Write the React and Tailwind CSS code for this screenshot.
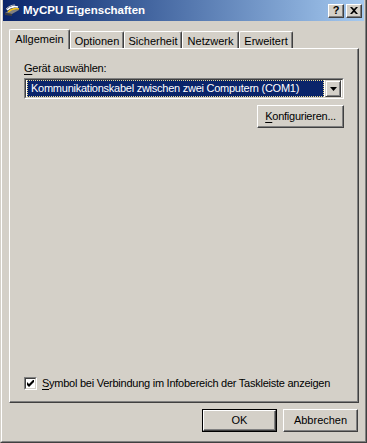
import React from 'react';

const font = { fontFamily: '"Liberation Sans", Arial, sans-serif' };

function TitleIcon() {
  return (
    <svg width="16" height="16" viewBox="0 0 16 16" className="shrink-0">
      <path d="M1 10 L9 6 L15 7 L8 11 Z" fill="#808080" />
      <path d="M1 10 L8 11 L8 13 L1 12 Z" fill="#404040" />
      <path d="M3 7 C6 4 10 3 14 4" stroke="#ffffff" strokeWidth="1.6" fill="none" />
      <path d="M4 9 C7 6 11 5 15 6" stroke="#f0c020" strokeWidth="1.6" fill="none" />
      <path d="M2 6 C5 3 8 2 11 2" stroke="#c0c0c0" strokeWidth="1" fill="none" />
    </svg>
  );
}

function CaptionButton({ children }) {
  return (
    <div className="w-[16px] h-[14px] bg-[#d4d0c8] border-t border-l border-t-white border-l-white border-r border-b border-r-[#404040] border-b-[#404040] shadow-[inset_-1px_-1px_0_#808080] flex items-center justify-center">
      {children}
    </div>
  );
}

function Tab({ label, width, selected }) {
  if (selected) {
    return (
      <div
        className="relative z-10 h-[20px] -mb-px bg-[#d4d0c8] border-l border-t border-l-white border-t-white border-r border-r-[#404040] shadow-[inset_-1px_0_0_#808080] rounded-tl-[2px] rounded-tr-[2px] flex justify-center pt-[3px] text-[11px] leading-[13px] text-black"
        style={{ width }}
      >
        {label}
      </div>
    );
  }
  return (
    <div
      className="h-[17px] bg-[#d4d0c8] border-l border-t border-l-white border-t-white border-r border-r-[#404040] shadow-[inset_-1px_0_0_#808080] rounded-tl-[2px] rounded-tr-[2px] flex justify-center pt-[3px] text-[11px] leading-[13px] text-black"
      style={{ width }}
    >
      {label}
    </div>
  );
}

function Button({ children, isDefault, className = '' }) {
  const inner = (
    <div className="w-full h-full bg-[#d4d0c8] border-t border-l border-t-white border-l-white border-r border-b border-r-[#404040] border-b-[#404040] shadow-[inset_-1px_-1px_0_#808080] flex items-center justify-center text-[11px] leading-[13px] text-black">
      {children}
    </div>
  );
  if (isDefault) {
    return <div className={`border border-black ${className}`}>{inner}</div>;
  }
  return <div className={className}>{inner}</div>;
}

export default function App() {
  const tabs = [
    { label: 'Allgemein', width: 61, selected: true },
    { label: 'Optionen', width: 54 },
    { label: 'Sicherheit', width: 58 },
    { label: 'Netzwerk', width: 57 },
    { label: 'Erweitert', width: 54 },
  ];

  return (
    <div className="w-[367px] h-[443px] bg-[#d4d0c8] border-l border-l-[#d4d0c8] border-r border-r-[#404040] border-b border-b-[#404040]" style={font}>
      <div className="h-full border-l border-l-white border-r border-r-[#808080] border-b border-b-[#808080] px-[1px] pb-[1px] flex flex-col">
        {/* Titelleiste */}
        <div className="h-[21px] shrink-0 bg-gradient-to-r from-[#0a246a] to-[#a6caf0] flex items-center pl-[1px] pr-[2px]">
          <TitleIcon />
          <span className="ml-[3px] text-white font-bold text-[11.5px] leading-[13px]">MyCPU Eigenschaften</span>
          <div className="ml-auto flex gap-[2px]">
            <CaptionButton>
              <span className="text-black font-bold text-[11px] leading-[11px]">?</span>
            </CaptionButton>
            <CaptionButton>
              <svg width="8" height="7" viewBox="0 0 8 7">
                <path d="M0 0 H2 L4 2 L6 0 H8 L5 3.5 L8 7 H6 L4 5 L2 7 H0 L3 3.5 Z" fill="#000" />
              </svg>
            </CaptionButton>
          </div>
        </div>

        {/* Registerkarten */}
        <div className="ml-[6px] mt-[8px] h-[19px] flex items-end">
          {tabs.map((t) => (
            <Tab key={t.label} {...t} />
          ))}
        </div>

        {/* Panel */}
        <div className="ml-[6px] w-[350px] h-[355px] border-l border-t border-l-white border-t-white border-r border-b border-r-[#404040] border-b-[#404040] shadow-[inset_-1px_-1px_0_#808080] pt-[13px] px-[14px] pb-[12px] flex flex-col text-[11px] leading-[13px] text-black tracking-[-0.25px]">
          <div>
            <u className="underline-offset-2">G</u>erät auswählen:
          </div>
          <div className="mt-[3px] h-[21px] border-t border-l border-t-[#808080] border-l-[#808080] border-r border-b border-r-white border-b-white">
            <div className="h-full border-t border-l border-t-[#404040] border-l-[#404040] border-r border-b border-r-[#d4d0c8] border-b-[#d4d0c8] bg-white flex items-center pl-[1px] pr-[1px] gap-[1px]">
              <div className="flex-1 h-[17px] bg-[#0a246a] outline outline-1 outline-dotted outline-[#e8d890] -outline-offset-1 text-white flex items-center pl-[4px] whitespace-nowrap">
                Kommunikationskabel zwischen zwei Computern (COM1)
              </div>
              <div className="w-[16px] h-[17px] bg-[#d4d0c8] border-t border-l border-t-[#d4d0c8] border-l-[#d4d0c8] border-r border-b border-r-[#404040] border-b-[#404040] shadow-[inset_1px_1px_0_#ffffff,inset_-1px_-1px_0_#808080] flex items-center justify-center">
                <svg width="7" height="4" viewBox="0 0 7 4">
                  <path d="M0 0 H7 L3.5 4 Z" fill="#000" />
                </svg>
              </div>
            </div>
          </div>
          <div className="mt-[6px] flex justify-end">
            <Button className="w-[87px] h-[23px]">
              <span>
                <u className="underline-offset-2">K</u>onfigurieren...
              </span>
            </Button>
          </div>

          <div className="mt-auto flex items-center gap-[5px] whitespace-nowrap">
            <div className="shrink-0 w-[13px] h-[13px] border-t border-l border-t-[#808080] border-l-[#808080] border-r border-b border-r-white border-b-white">
              <div className="w-full h-full border-t border-l border-t-[#404040] border-l-[#404040] border-r border-b border-r-[#d4d0c8] border-b-[#d4d0c8] bg-white flex items-center justify-center">
                <svg width="7" height="7" viewBox="0 0 7 7">
                  <path d="M0 2 L2 4 L7 -1 V2 L2 7 L0 5 Z" fill="#000" />
                </svg>
              </div>
            </div>
            <span>
              <u className="underline-offset-2">S</u>ymbol bei Verbindung im Infobereich der Taskleiste anzeigen
            </span>
          </div>
        </div>

        {/* Schaltflächen */}
        <div className="mt-[6px] mr-[6px] flex justify-end gap-[6px]">
          <Button isDefault className="w-[75px] h-[23px]">OK</Button>
          <Button className="w-[75px] h-[23px]">Abbrechen</Button>
        </div>
      </div>
    </div>
  );
}
